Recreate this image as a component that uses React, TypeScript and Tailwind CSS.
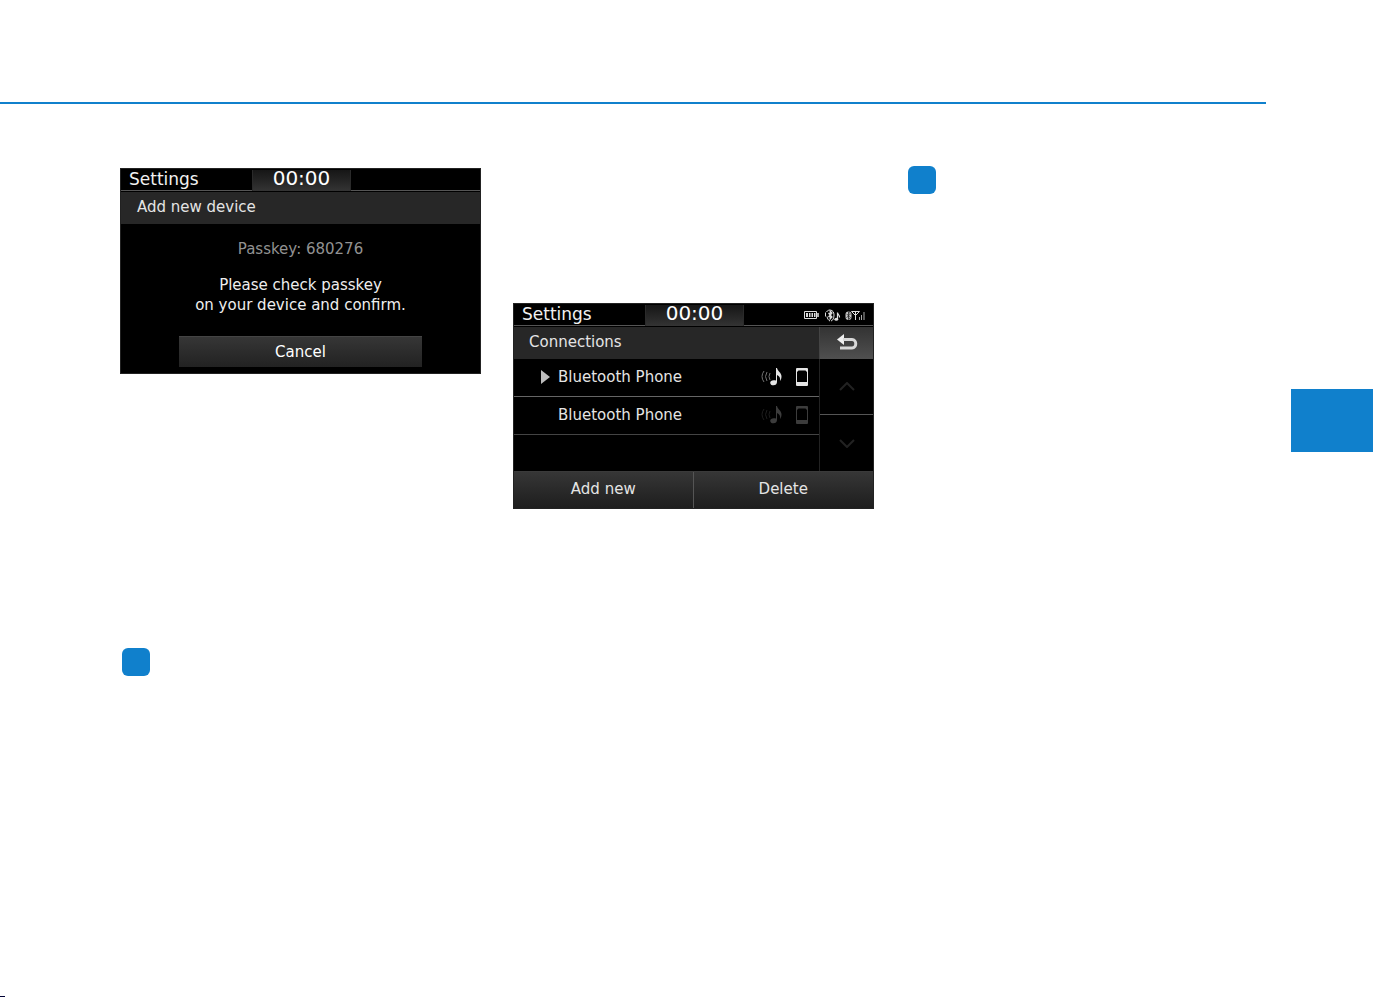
import clsx from "clsx";

interface ScreenProps {
	label: string;
	className?: string;
	status?: React.ReactNode;
	children: React.ReactNode;
}

const Screen: React.FC<ScreenProps> = ({
	label,
	className,
	status,
	children,
}) => (
	<section
		aria-label={label}
		className={clsx(
			"flex h-[206px] flex-col border border-[#222222] bg-black text-[15px] leading-5 text-[#e4e4e4]",
			className
		)}
	>
		<header className="grid h-[22px] shrink-0 grid-cols-[131px_99px_1fr] items-center border-b border-[#555555]">
			<h2 className="pb-0.5 pl-2 text-[17px] text-[#f0f0f0]">Settings</h2>
			<time className="flex h-[21px] items-center justify-center border-x border-[#2a2a2a] bg-linear-to-b from-[#161616] to-[#343434] pb-1 text-[20px] text-white">
				00:00
			</time>
			<div className="flex items-center justify-end pr-2">{status}</div>
		</header>
		{children}
	</section>
);

const StatusIcons = () => (
	<svg
		width="62"
		height="14"
		viewBox="0 0 62 14"
		fill="none"
		className="mt-0.5 text-[#dddddd]"
		aria-hidden="true"
	>
		{/* battery */}
		<path d="M1.500 2.500h12v7h-12z" stroke="currentColor" />
		<path d="M14 4h2v4h-2z" fill="#aaaaaa" />
		<path d="M3 4h2v4H3zM6 4h1.500v4H6zM8.500 4H10v4H8.500zM11 4h1.500v4H11z" fill="currentColor" />
		{/* bluetooth headset with a note */}
		<path
			d="M23.500 3C25 0 31 0 31 6c0 3-1 5.500-3 6M22.500 3.500v4M24 7.500c.3 2 1.500 4 3 4.500"
			stroke="currentColor"
		/>
		<path
			d="M25.500 4l3.500 4-1.800 2V2L29 4l-3.500 4"
			stroke="currentColor"
			strokeWidth="1.200"
		/>
		<path d="M34.500 10V3.500c0 2 2.500 2.500 2 5" stroke="currentColor" strokeWidth="1.200" />
		<ellipse cx="33.300" cy="10.300" rx="1.900" ry="1.500" fill="currentColor" />
		{/* bluetooth phone signal */}
		<rect x="42.500" y="2.500" width="6" height="8.500" rx="3" fill="#c8c8c8" />
		<path
			d="M43.500 4.800l4 4-2 1.700V3l2 1.800-4 4"
			stroke="#222222"
			strokeWidth=".8"
		/>
		<path d="M48.500 2.500h8l-4 4-4-4M52.500 3v8" stroke="currentColor" />
		<path d="M56.500 8v3M58.500 6v5M61 3v8" stroke="#aaaaaa" />
	</svg>
);

const NoteIcon = () => (
	<svg width="22" height="20" viewBox="0 0 22 20" fill="none" aria-hidden="true">
		<g stroke="currentColor" opacity=".5">
			<path d="M3 4Q-1 9.500 3 15" />
			<path d="M6 5Q3 9.500 6 14" />
			<path d="M9 6Q7 9.500 9 13" />
		</g>
		<path
			d="M15 1h1c.4 3 4.500 4.500 4.500 8.500 0 2-.8 3.500-1.500 4.500.6-3-.5-5-3-6v7c0 2-1.500 3.300-3.500 3.300s-3.300-1-3.300-2.600c0-2 2.500-3.200 5.800-2.200Z"
			fill="currentColor"
		/>
	</svg>
);

const PhoneIcon = () => (
	<svg width="12" height="18" viewBox="0 0 12 18" aria-hidden="true">
		<path
			d="M1 0h10a1 1 0 0 1 1 1v16a1 1 0 0 1-1 1H1a1 1 0 0 1-1-1V1a1 1 0 0 1 1-1Zm0 4v10h10V4L9.500 2.500h-7Z"
			fill="currentColor"
			fillRule="evenodd"
		/>
	</svg>
);

const BackIcon = () => (
	<svg width="22" height="18" viewBox="0 0 22 18" fill="none" aria-hidden="true">
		<path d="M1 5.500 8 0v11Z" fill="#f0f0f0" />
		<path
			d="M7 5.500h9c5 0 5 8.500 0 8.500H4"
			stroke="#d8d8d8"
			strokeWidth="3"
		/>
	</svg>
);

const Chevron = ({ down = false }: { down?: boolean }) => (
	<svg width="16" height="9" viewBox="0 0 16 9" fill="none" aria-hidden="true">
		<path
			d={down ? "M1 1l7 7 7-7" : "M1 8l7-7 7 7"}
			stroke="#222222"
			strokeWidth="2"
		/>
	</svg>
);

const devices = [
	{ name: "Bluetooth Phone", connected: true },
	{ name: "Bluetooth Phone", connected: false },
];

const PasskeyScreen = () => (
	<Screen label="Add new device" className="mt-0.5">
		<h3 className="mt-px flex h-8 shrink-0 items-center bg-[#272727] pb-0.5 pl-4">
			Add new device
		</h3>
		<div className="flex flex-1 flex-col items-center text-center">
			<p className="mt-[15px] text-[#929292]">Passkey: 680276</p>
			<p className="mt-4 text-[#eeeeee]">
				Please check passkey
				<br />
				on your device and confirm.
			</p>
			<button
				type="button"
				className="mt-auto mb-1.5 h-[31px] w-[243px] border-t border-[#444444] bg-linear-to-b from-[#363636] to-[#222222] text-white"
			>
				Cancel
			</button>
		</div>
	</Screen>
);

const ConnectionsScreen = () => (
	<Screen
		label="Connections"
		className="mt-[137px]"
		status={<StatusIcons />}
	>
		<div className="grid shrink-0 grid-cols-[1fr_54px]">
			<h3 className="mt-px flex h-8 items-center bg-[#272727] pb-0.5 pl-[15px]">
				Connections
			</h3>
			<button
				type="button"
				aria-label="Back"
				className="mt-px flex h-8 items-center justify-center border-l border-[#444444] bg-linear-to-b from-[#333333] to-[#505050]"
			>
				<BackIcon />
			</button>
		</div>
		<div className="grid flex-1 grid-cols-[1fr_54px]">
			<ul>
				{devices.map((device, idx) => (
					<li
						key={idx}
						className={clsx(
							"flex h-[38px] items-center border-b pr-[11px] pb-px pl-[27px]",
							device.connected
								? "border-[#666666] text-[#e4e4e4]"
								: "border-[#444444] text-[#3c3c3c]"
						)}
					>
						<span className="w-[17px]">
							{device.connected && (
								<svg width="9" height="14" viewBox="0 0 9 14" aria-hidden="true">
									<path d="M0 0 9 7 0 14Z" fill="#bdbdbd" />
								</svg>
							)}
						</span>
						<span className="flex-1 text-[#e4e4e4]">{device.name}</span>
						<span className="flex items-center gap-[13px]">
							<NoteIcon />
							<PhoneIcon />
						</span>
					</li>
				))}
			</ul>
			<div className="grid grid-rows-2 border-l border-[#222222]">
				<button
					type="button"
					aria-label="Scroll up"
					className="flex items-center justify-center border-b border-[#555555]"
				>
					<Chevron />
				</button>
				<button
					type="button"
					aria-label="Scroll down"
					className="flex items-center justify-center"
				>
					<Chevron down />
				</button>
			</div>
		</div>
		<div className="grid h-[37px] shrink-0 grid-cols-2 border-t border-[#3a3a3a] bg-linear-to-b from-[#363636] to-[#1e1e1e]">
			<button type="button" className="border-r border-[#555555] pb-0.5">
				Add new
			</button>
			<button type="button" className="pb-0.5">
				Delete
			</button>
		</div>
	</Screen>
);

const Marker = ({ className }: { className?: string }) => (
	<div className={clsx("h-7 w-7 rounded-md bg-[#1080cc]", className)} />
);

export default function App() {
	return (
		<div className="flex min-h-screen bg-white font-['DejaVu_Sans',sans-serif]">
			<div className="flex flex-1 flex-col">
				<div className="h-[104px] border-b-2 border-[#1080cc]" />
				<main className="grid grid-cols-[361px_361px_1fr] gap-8 pt-[62px] pl-[120px]">
					<div>
						<PasskeyScreen />
						<Marker className="mt-[274px] ml-0.5" />
					</div>
					<div>
						<ConnectionsScreen />
					</div>
					<div>
						<Marker className="ml-0.5" />
					</div>
				</main>
				<div className="mt-auto h-px w-[5px] bg-[#000033]" />
			</div>
			<aside className="mt-[389px] mr-[15px] ml-[25px] h-[63px] w-[82px] bg-[#1080cc]" />
		</div>
	);
}
